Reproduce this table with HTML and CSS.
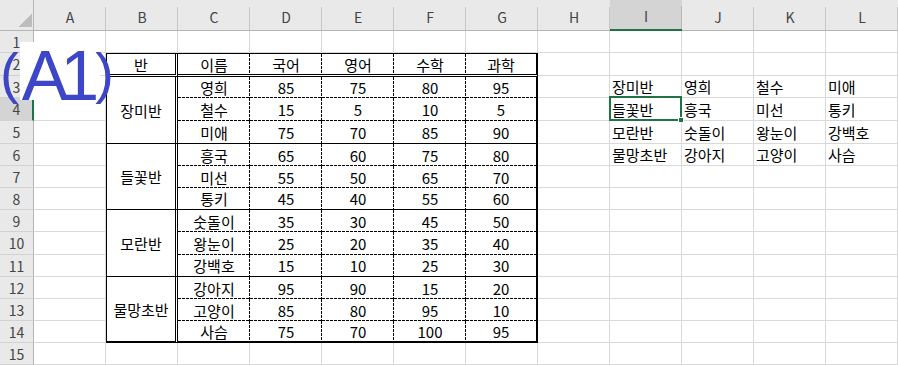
FILE: index.html
```html
<!DOCTYPE html>
<html lang="ko">
<head>
<meta charset="utf-8">
<title>Sheet</title>
<link rel="stylesheet" href="styles.css">
</head>
<body>
<div class="sheet">
  <div class="corner"></div>
  <div class="ch">A</div><div class="ch">B</div><div class="ch">C</div><div class="ch">D</div><div class="ch">E</div><div class="ch">F</div><div class="ch">G</div><div class="ch">H</div><div class="ch sel">I</div><div class="ch">J</div><div class="ch">K</div><div class="ch">L</div>

  <div class="tbl">
    <div class="td dbr dbb">반</div><div class="td dr dbb">이름</div><div class="td dr dbb">국어</div><div class="td dr dbb">영어</div><div class="td dr dbb">수학</div><div class="td tr dbb">과학</div>

    <div class="td grp dbr sb">장미반</div><div class="td dr db">영희</div><div class="td dr db">85</div><div class="td dr db">75</div><div class="td dr db">80</div><div class="td tr db">95</div>
    <div class="td dr db">철수</div><div class="td dr db">15</div><div class="td dr db">5</div><div class="td dr db">10</div><div class="td tr db">5</div>
    <div class="td dr sb">미애</div><div class="td dr sb">75</div><div class="td dr sb">70</div><div class="td dr sb">85</div><div class="td tr sb">90</div>

    <div class="td grp dbr sb">들꽃반</div><div class="td dr db">흥국</div><div class="td dr db">65</div><div class="td dr db">60</div><div class="td dr db">75</div><div class="td tr db">80</div>
    <div class="td dr db">미선</div><div class="td dr db">55</div><div class="td dr db">50</div><div class="td dr db">65</div><div class="td tr db">70</div>
    <div class="td dr sb">통키</div><div class="td dr sb">45</div><div class="td dr sb">40</div><div class="td dr sb">55</div><div class="td tr sb">60</div>

    <div class="td grp dbr sb">모란반</div><div class="td dr db">숫돌이</div><div class="td dr db">35</div><div class="td dr db">30</div><div class="td dr db">45</div><div class="td tr db">50</div>
    <div class="td dr db">왕눈이</div><div class="td dr db">25</div><div class="td dr db">20</div><div class="td dr db">35</div><div class="td tr db">40</div>
    <div class="td dr sb">강백호</div><div class="td dr sb">15</div><div class="td dr sb">10</div><div class="td dr sb">25</div><div class="td tr sb">30</div>

    <div class="td grp dbr tb">물망초반</div><div class="td dr db">강아지</div><div class="td dr db">95</div><div class="td dr db">90</div><div class="td dr db">15</div><div class="td tr db">20</div>
    <div class="td dr db">고양이</div><div class="td dr db">85</div><div class="td dr db">80</div><div class="td dr db">95</div><div class="td tr db">10</div>
    <div class="td dr tb">사슴</div><div class="td dr tb">75</div><div class="td dr tb">70</div><div class="td dr tb">100</div><div class="td tr tb">95</div>
  </div>

  <div class="rh">1</div><div class="c"></div><div class="c"></div><div class="c"></div><div class="c"></div><div class="c"></div><div class="c"></div><div class="c"></div><div class="c"></div><div class="c"></div><div class="c"></div><div class="c"></div><div class="c"></div>
  <div class="rh">2</div><div class="c"></div><div class="c"></div><div class="c"></div><div class="c"></div><div class="c"></div><div class="c"></div>
  <div class="rh">3</div><div class="c"></div><div class="c"></div><div class="c tx">장미반</div><div class="c tx">영희</div><div class="c tx">철수</div><div class="c tx">미애</div>
  <div class="rh sel">4</div><div class="c"></div><div class="c"></div><div class="c tx cur">들꽃반<span class="selbox"><span class="fill"></span></span></div><div class="c tx">흥국</div><div class="c tx">미선</div><div class="c tx">통키</div>
  <div class="rh">5</div><div class="c"></div><div class="c"></div><div class="c tx">모란반</div><div class="c tx">숫돌이</div><div class="c tx">왕눈이</div><div class="c tx">강백호</div>
  <div class="rh">6</div><div class="c"></div><div class="c"></div><div class="c tx">물망초반</div><div class="c tx">강아지</div><div class="c tx">고양이</div><div class="c tx">사슴</div>
  <div class="rh">7</div><div class="c"></div><div class="c"></div><div class="c"></div><div class="c"></div><div class="c"></div><div class="c"></div>
  <div class="rh">8</div><div class="c"></div><div class="c"></div><div class="c"></div><div class="c"></div><div class="c"></div><div class="c"></div>
  <div class="rh">9</div><div class="c"></div><div class="c"></div><div class="c"></div><div class="c"></div><div class="c"></div><div class="c"></div>
  <div class="rh">10</div><div class="c"></div><div class="c"></div><div class="c"></div><div class="c"></div><div class="c"></div><div class="c"></div>
  <div class="rh">11</div><div class="c"></div><div class="c"></div><div class="c"></div><div class="c"></div><div class="c"></div><div class="c"></div>
  <div class="rh">12</div><div class="c"></div><div class="c"></div><div class="c"></div><div class="c"></div><div class="c"></div><div class="c"></div>
  <div class="rh">13</div><div class="c"></div><div class="c"></div><div class="c"></div><div class="c"></div><div class="c"></div><div class="c"></div>
  <div class="rh">14</div><div class="c"></div><div class="c"></div><div class="c"></div><div class="c"></div><div class="c"></div><div class="c"></div>
  <div class="rh">15</div><div class="c"></div><div class="c"></div><div class="c"></div><div class="c"></div><div class="c"></div><div class="c"></div><div class="c"></div><div class="c"></div><div class="c"></div><div class="c"></div><div class="c"></div><div class="c"></div>

  <div class="tag-bg"></div>
  <div class="tag"><span class="tag-p1">(</span><span class="tag-a">A</span><span class="tag-1">1</span><span class="tag-p2">)</span></div>
</div>
</body>
</html>
```
FILE: styles.css
```css
html, body {
  margin: 0;
  padding: 0;
  background: #fff;
  overflow: hidden;
}

.sheet {
  position: relative;
  display: grid;
  grid-template-columns: 34px repeat(12, 72px);
  grid-template-rows: 31px 22px 23px 22px 23px 23px 22px 22px 22px 22px 23px 22px 22px 22px 22px 22px;
  width: 898px;
  height: 365px;
  font-family: "Noto Sans CJK KR", "Noto Sans", sans-serif;
  font-size: 15px;
  color: #000;
}

.corner {
  box-sizing: border-box;
  border-right: 1px solid #b5b5b5;
  border-bottom: 1px solid #b5b5b5;
  background:
    linear-gradient(135deg, transparent 50%, #bdbdbd 50%) right 1px bottom 3px / 14px 14px no-repeat,
    #e9e9e9;
}

.ch {
  box-sizing: border-box;
  border-bottom: 1px solid #b5b5b5;
  background:
    linear-gradient(#c6c6c6, #c6c6c6) right bottom / 1px 23px no-repeat,
    #e9e9e9;
  color: #444;
  font-size: 14px;
  display: flex;
  justify-content: center;
  align-items: center;
  padding-top: 4px;
}

.ch.sel {
  background:
    linear-gradient(#b8b8b8, #b8b8b8) right bottom / 1px 23px no-repeat,
    #d4d4d4;
  border-bottom: 2px solid #217346;
  padding-top: 3px;
}

.rh {
  box-sizing: border-box;
  border-right: 1px solid #b5b5b5;
  border-bottom: 1px solid #d2d2d2;
  background: #e9e9e9;
  color: #444;
  font-size: 14px;
  display: flex;
  justify-content: center;
  align-items: center;
}

.rh.sel {
  background: #d4d4d4;
  border-right: 2px solid #217346;
  padding-left: 1px;
}

.c {
  box-sizing: border-box;
  border-right: 1px solid #d9d9d9;
  border-bottom: 1px solid #d9d9d9;
}

.tx {
  display: flex;
  align-items: center;
  padding-left: 2px;
  white-space: nowrap;
}

.cur {
  position: relative;
}

.selbox {
  position: absolute;
  left: -1px;
  top: -2px;
  right: -1px;
  bottom: -1px;
  border: 2px solid #217346;
}

.fill {
  position: absolute;
  right: -4px;
  bottom: -4px;
  width: 4px;
  height: 4px;
  background: #217346;
  border: 1px solid #fff;
}

/* data table B2:G14 */
.tbl {
  grid-column: 3 / 9;
  grid-row: 3 / 16;
  margin: -1px 0 0 -1px;
  border-top: 2px solid #000;
  border-left: 2px solid #000;
  background: #fff;
  display: grid;
  grid-template-columns: 71px repeat(5, 72px);
  grid-template-rows: 23px 21px 23px 23px 22px 22px 22px 22px 23px 22px 22px 22px 22px;
}

.td {
  --dashr: none;
  --dashb: none;
  box-sizing: border-box;
  display: flex;
  justify-content: center;
  align-items: center;
  white-space: nowrap;
  background-image: var(--dashr), var(--dashb);
  background-repeat: no-repeat, no-repeat;
  background-position: right top, left bottom;
  background-size: 1px 100%, 100% 1px;
}

.grp { grid-row: span 3; }

.dr { --dashr: repeating-linear-gradient(to bottom, #000 0 3px, transparent 3px 4px); }
.db { --dashb: repeating-linear-gradient(to right, #000 0 3px, transparent 3px 4px); }
.dbr { border-right: 3px double #000; }
.dbb { border-bottom: 3px double #000; }
.sb { border-bottom: 1px solid #000; }
.tb { border-bottom: 2px solid #000; }
.tr { border-right: 2px solid #000; }

/* pasted label */
.tag-bg {
  position: absolute;
  left: 20px;
  top: 42px;
  width: 80px;
  height: 58px;
  background: #fff;
}

.tag {
  position: absolute;
  left: 0;
  top: 41px;
  font-family: "Liberation Sans", Arial, sans-serif;
  font-size: 70px;
  line-height: 70px;
  color: #3c46c6;
  white-space: nowrap;
}

.tag-p1,
.tag-p2 {
  font-size: 56px;
  line-height: 56px;
  vertical-align: 8px;
}

.tag-p1 { letter-spacing: 3px; }
.tag-a { letter-spacing: -8px; }
.tag-1 { letter-spacing: -4px; }
```
